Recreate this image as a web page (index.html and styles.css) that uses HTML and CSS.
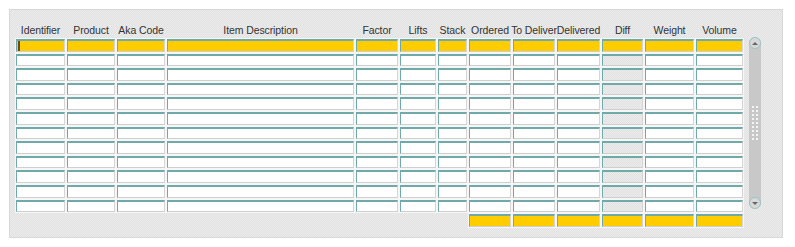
FILE: index.html
```html
<!DOCTYPE html>
<html lang="en">
<head>
    <meta charset="UTF-8">
    <title>Delivery Lines</title>
    <link rel="stylesheet" href="styles.css">
</head>
<body>
    <div class="panel">
        <div class="grid" id="grid">
            <div class="head">Identifier</div>
            <div class="head">Product</div>
            <div class="head">Aka Code</div>
            <div class="head">Item Description</div>
            <div class="head">Factor</div>
            <div class="head">Lifts</div>
            <div class="head">Stack</div>
            <div class="head">Ordered</div>
            <div class="head">To Deliver</div>
            <div class="head">Delivered</div>
            <div class="head">Diff</div>
            <div class="head">Weight</div>
            <div class="head">Volume</div>
            <div class="head"></div>

            <div class="scroll">
                <div class="scroll-btn up"><span class="arrow-up"></span></div>
                <div class="grip"></div>
                <div class="scroll-btn down"><span class="arrow-down"></span></div>
            </div>
        </div>
    </div>

    <script>
        // build the 12 item rows plus the totals row
        const grid = document.getElementById("grid");
        const scroll = grid.querySelector(".scroll");
        for (let r = 0; r < 12; r++) {
            for (let c = 0; c < 13; c++) {
                const cell = document.createElement("div");
                cell.className = "cell";
                if (r === 0) cell.classList.add("current");
                if (c === 10 && r > 0) cell.classList.add("disabled");
                if (r === 0 && c === 0) cell.innerHTML = '<span class="caret"></span>';
                grid.insertBefore(cell, scroll);
            }
        }
        // totals row: only Ordered .. Volume
        for (let c = 0; c < 13; c++) {
            const cell = document.createElement("div");
            cell.className = c >= 7 ? "cell current" : "blank";
            grid.appendChild(cell);
        }
    </script>
</body>
</html>
```

FILE: styles.css
```css
body {
    margin: 0;
    background-color: #fff;
    font-family: 'Liberation Sans', Arial, sans-serif;
}
.panel {
    margin: 9px 0 0 9px;
    width: 774px;
    height: 229px;
    box-sizing: border-box;
    padding: 14px 0 0 6px;
    border: 1px solid #d8d8d8;
    background: repeating-conic-gradient(#e1e1e1 0 25%, #ececec 0 50%) 0 0 / 2px 2px;
}
.grid {
    display: grid;
    grid-template-columns: 49px 48px 48px 187px 42px 36px 29px 42px 42px 43px 41px 49px 47px 12px;
    grid-template-rows: 13px repeat(12, 12.6px) 12.6px;
    column-gap: 2px;
    row-gap: 2px;
}
.head {
    display: flex;
    justify-content: center;
    align-items: center;
    white-space: nowrap;
    font-size: 10.5px;
    letter-spacing: -0.1px;
    color: #333;
    margin-top: -2px;
}
.cell {
    position: relative;
    box-sizing: border-box;
    background-color: #fff;
    border-top: 2px solid #6fa9aa;
    border-left: 1px solid #6fa9aa;
    border-right: 1px solid #d6d6d6;
    border-bottom: 1px solid #cfcfcf;
    box-shadow: 0 0 0 1px #f6f6f6;
}
.cell.current {
    background-color: #ffcc00;
}
.cell.disabled {
    background: repeating-conic-gradient(#e1e1e1 0 25%, #ececec 0 50%) 0 0 / 2px 2px;
}
.caret {
    position: absolute;
    left: 1px;
    top: 0;
    bottom: 0;
    width: 2px;
    background-color: #6a4b10;
}
.scroll {
    grid-column: 14;
    grid-row: 2 / span 12;
    margin: -2px 0 3px 4px;
    width: 12px;
    display: flex;
    flex-direction: column;
    justify-content: space-between;
    align-items: center;
    background-color: #c8c8c8;
    border-radius: 6px;
}
.scroll-btn {
    box-sizing: border-box;
    width: 12px;
    height: 12px;
    border: 1px solid #9cc4c4;
    border-radius: 6px;
    background-color: #d8d8d8;
    display: flex;
    justify-content: center;
    align-items: center;
}
.arrow-up {
    width: 0;
    height: 0;
    border-left: 3px solid transparent;
    border-right: 3px solid transparent;
    border-bottom: 3px solid #666;
}
.arrow-down {
    width: 0;
    height: 0;
    border-left: 3px solid transparent;
    border-right: 3px solid transparent;
    border-top: 3px solid #666;
}
.grip {
    width: 8px;
    height: 36px;
    background: radial-gradient(circle, #f4f4f4 0 1px, transparent 1.2px) 0 0 / 4px 4px;
}
.blank {
    background: transparent;
}
```
